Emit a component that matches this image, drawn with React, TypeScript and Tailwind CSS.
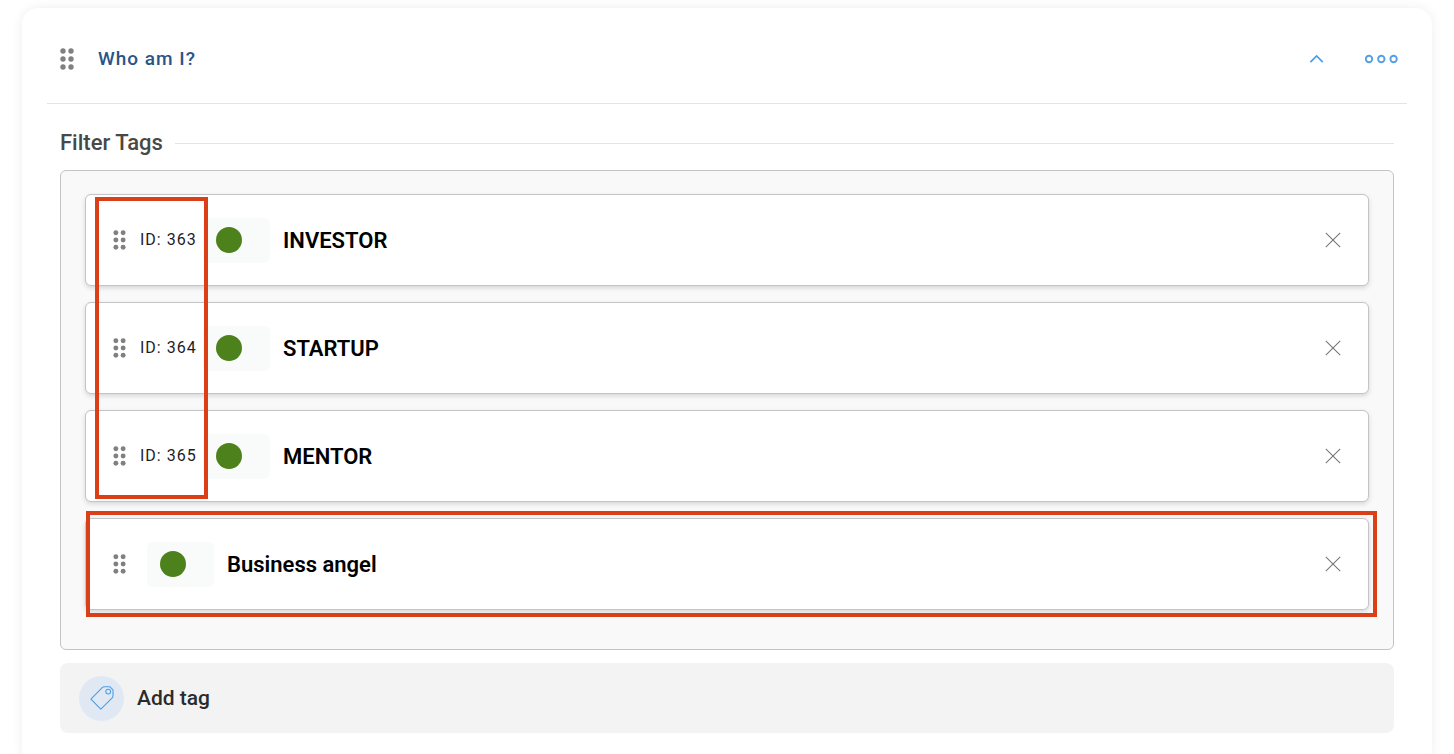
import { useState } from "react";

type Tag = { key: string; id?: number; name: string };

const initialTags: Tag[] = [
  { key: "investor", id: 363, name: "INVESTOR" },
  { key: "startup", id: 364, name: "STARTUP" },
  { key: "mentor", id: 365, name: "MENTOR" },
  { key: "business-angel", name: "Business angel" },
];

const DragHandle = ({ className }: { className: string }) => (
  <svg viewBox="0 0 14 22" className={className} fill="#808080" aria-hidden="true">
    {[3, 11, 19].map((y) => (
      <g key={y}>
        <circle cx="3" cy={y} r="2.7" />
        <circle cx="11" cy={y} r="2.7" />
      </g>
    ))}
  </svg>
);

const TagRow = ({ tag, onRemove }: { tag: Tag; onRemove: () => void }) => (
  <li className="flex h-[92px] items-center rounded-md border border-[#c4c4c4] bg-white pr-[26px] pl-[27px] shadow-[0_2px_5px_rgba(0,0,0,0.14)]">
    <button type="button" aria-label={`Move ${tag.name}`} className="shrink-0 cursor-grab">
      <DragHandle className="h-5 w-[13px]" />
    </button>
    {tag.id ? <span className="ml-[14px] w-[63px] text-base tracking-[1px] whitespace-nowrap text-[#1d1d1f]">ID: {tag.id}</span> : <span className="w-[21px]" />}
    <button type="button" aria-label={`Color of ${tag.name}`} className="flex h-[45px] w-[67px] shrink-0 items-center rounded-md bg-[#f9fbfa] pl-[13px]">
      <span className="size-[26px] rounded-full bg-[#4d811c]" />
    </button>
    <span className="ml-[13px] flex-1 pt-0.5 text-[22px] leading-7 font-semibold text-black">{tag.name}</span>
    <button type="button" aria-label={`Remove ${tag.name}`} onClick={onRemove} className="shrink-0">
      <svg viewBox="0 0 18 18" className="size-[18px]" fill="none" stroke="#777777" strokeWidth="1.1" aria-hidden="true">
        <path d="M1.8 1.8 16.2 16.2M16.2 1.8 1.8 16.2" />
      </svg>
    </button>
  </li>
);

export default function App() {
  const [tags, setTags] = useState(initialTags);
  const [open, setOpen] = useState(true);

  const addTag = () => setTags([...tags, { key: `tag-${Date.now()}`, name: "New tag" }]);

  return (
    <main className="bg-white px-[22px] pt-2 font-['Roboto',sans-serif]">
      <section className="rounded-2xl bg-white px-[25px] pb-8 shadow-[0_0_12px_rgba(0,0,0,0.07)]">
        <header className="flex h-24 items-center border-b border-[#e4e4e4] pt-[6px] pr-2 pl-[13px]">
          <div className="flex flex-1 items-center">
            <button type="button" aria-label="Move group" className="cursor-grab">
              <DragHandle className="h-[22px] w-[14px]" />
            </button>
            <h1 className="ml-6 text-[19px] leading-7 font-medium tracking-[1px] text-[#2a5587]">Who am I?</h1>
          </div>
          <button type="button" aria-label="Toggle group" aria-expanded={open} onClick={() => setOpen(!open)} className="mr-10">
            <svg viewBox="0 0 16 10" className="h-[10px] w-4" fill="none" stroke="#4a9fe8" strokeWidth="1.7" aria-hidden="true">
              <path d="M2.4 8.2 8.6 2 14.8 8.2" />
            </svg>
          </button>
          <button type="button" aria-label="More options">
            <svg viewBox="0 0 35 10" className="h-[10px] w-[35px]" fill="none" stroke="#559fe5" strokeWidth="1.9" aria-hidden="true">
              <circle cx="5" cy="5" r="3.2" />
              <circle cx="17.3" cy="5" r="3.2" />
              <circle cx="29.6" cy="5" r="3.2" />
            </svg>
          </button>
        </header>

        {open && (
          <div className="px-[13px] pt-[25px]">
            <div className="flex items-center gap-3">
              <h2 className="text-[22px] leading-7 font-medium text-[#484848]">Filter Tags</h2>
              <span className="h-px flex-1 bg-[#e4e4e4]" />
            </div>

            <div className="mt-[13px] rounded-md border border-[#c4c4c4] bg-[#f9f9f9] px-6 pt-[23px] pb-[39px]">
              <div className="relative">
                <ul className="flex flex-col gap-4">
                  {tags.map((tag) => (
                    <TagRow key={tag.key} tag={tag} onRemove={() => setTags(tags.filter((t) => t.key !== tag.key))} />
                  ))}
                </ul>
                {/* highlight frames over the id column and the newest tag */}
                <div className="pointer-events-none absolute top-[3px] left-[10px] h-[302px] w-[113px] border-4 border-[#da3f17]" />
                <div className="pointer-events-none absolute top-[317px] -right-2 left-px h-[106px] border-4 border-[#da3f17]" />
              </div>
            </div>

            <button type="button" onClick={addTag} className="mt-[13px] flex h-[70px] w-full items-center gap-[13px] rounded-lg bg-[#f3f3f3] px-[19px]">
              <span className="flex size-[45px] items-center justify-center rounded-full bg-[#e0e9f3]">
                <svg viewBox="0 0 24 24" className="size-6" fill="none" stroke="#4a9fe8" strokeWidth="1.1" strokeLinejoin="round" aria-hidden="true">
                  <path d="M.9 13.2 12.2 1.7Q13.2.8 14.6.8H20L23 3.8V9.8Q23 11.2 22 12.2L10.8 23.2Z" />
                  <circle cx="18.2" cy="5.6" r="2.4" />
                </svg>
              </span>
              <span className="text-[21px] leading-7 font-medium text-[#2b2b2b]">Add tag</span>
            </button>
          </div>
        )}
      </section>
    </main>
  );
}
